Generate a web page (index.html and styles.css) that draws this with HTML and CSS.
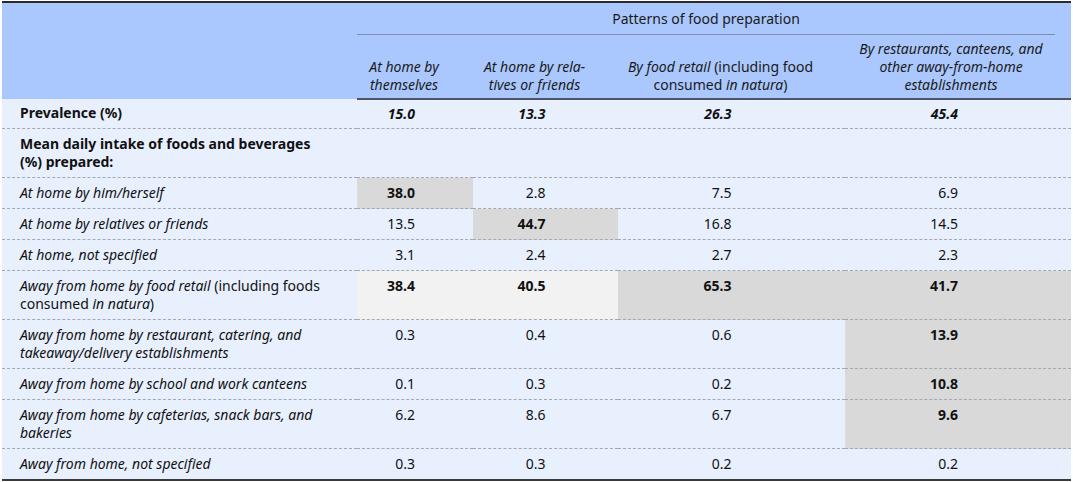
FILE: index.html
```html
<!DOCTYPE html>
<html lang="en">
<head>
<meta charset="utf-8">
<title>Patterns of food preparation</title>
<link rel="stylesheet" href="styles.css">
</head>
<body>
<table class="tbl">
  <colgroup>
    <col class="c-label">
    <col class="c-a">
    <col class="c-b">
    <col class="c-c">
    <col class="c-d">
  </colgroup>
  <thead>
    <tr>
      <th class="corner" rowspan="2"></th>
      <th class="span-head" colspan="4"><div class="span-inner">Patterns of food preparation</div></th>
    </tr>
    <tr class="sub-head">
      <th><em>At home by<br>themselves</em></th>
      <th><em>At home by rela-<br>tives or friends</em></th>
      <th><em>By food retail</em> (including food<br>consumed <em>in natura</em>)</th>
      <th class="last"><em>By restaurants, canteens, and<br>other away-from-home<br>establishments</em></th>
    </tr>
  </thead>
  <tbody>
    <tr>
      <td class="label bold">Prevalence (%)</td>
      <td><span class="num bold"><em>15.0</em></span></td>
      <td><span class="num bold"><em>13.3</em></span></td>
      <td><span class="num bold"><em>26.3</em></span></td>
      <td><span class="num bold"><em>45.4</em></span></td>
    </tr>
    <tr>
      <td class="label bold">Mean daily intake of foods and beverages<br>(%) prepared:</td>
      <td></td><td></td><td></td><td></td>
    </tr>
    <tr>
      <td class="label"><em>At home by him/herself</em></td>
      <td class="hl"><span class="num bold">38.0</span></td>
      <td><span class="num">2.8</span></td>
      <td><span class="num">7.5</span></td>
      <td><span class="num">6.9</span></td>
    </tr>
    <tr>
      <td class="label"><em>At home by relatives or friends</em></td>
      <td><span class="num">13.5</span></td>
      <td class="hl"><span class="num bold">44.7</span></td>
      <td><span class="num">16.8</span></td>
      <td><span class="num">14.5</span></td>
    </tr>
    <tr>
      <td class="label"><em>At home, not specified</em></td>
      <td><span class="num">3.1</span></td>
      <td><span class="num">2.4</span></td>
      <td><span class="num">2.7</span></td>
      <td><span class="num">2.3</span></td>
    </tr>
    <tr>
      <td class="label"><em>Away from home by food retail</em> (including foods<br>consumed <em>in natura</em>)</td>
      <td class="soft"><span class="num bold">38.4</span></td>
      <td class="soft"><span class="num bold">40.5</span></td>
      <td class="hl"><span class="num bold">65.3</span></td>
      <td class="hl"><span class="num bold">41.7</span></td>
    </tr>
    <tr>
      <td class="label"><em>Away from home by restaurant, catering, and<br>takeaway/delivery establishments</em></td>
      <td><span class="num">0.3</span></td>
      <td><span class="num">0.4</span></td>
      <td><span class="num">0.6</span></td>
      <td class="hl"><span class="num bold">13.9</span></td>
    </tr>
    <tr>
      <td class="label"><em>Away from home by school and work canteens</em></td>
      <td><span class="num">0.1</span></td>
      <td><span class="num">0.3</span></td>
      <td><span class="num">0.2</span></td>
      <td class="hl"><span class="num bold">10.8</span></td>
    </tr>
    <tr>
      <td class="label"><em>Away from home by cafeterias, snack bars, and<br>bakeries</em></td>
      <td><span class="num">6.2</span></td>
      <td><span class="num">8.6</span></td>
      <td><span class="num">6.7</span></td>
      <td class="hl"><span class="num bold">9.6</span></td>
    </tr>
    <tr>
      <td class="label"><em>Away from home, not specified</em></td>
      <td><span class="num">0.3</span></td>
      <td><span class="num">0.3</span></td>
      <td><span class="num">0.2</span></td>
      <td><span class="num">0.2</span></td>
    </tr>
  </tbody>
</table>
</body>
</html>
```
FILE: styles.css
```css
html, body {
  margin: 0;
  padding: 0;
  background: #ffffff;
}

body {
  padding: 1px 2px 0 2px;
  font-family: "Noto Sans", "DejaVu Sans", sans-serif;
  font-size: 14px;
  line-height: 18px;
  color: #111111;
}

.tbl {
  width: 1069px;
  border-collapse: collapse;
  table-layout: fixed;
  border-top: 2px solid #2b2b2b;
  border-bottom: 2px solid #3a3a3a;
}

.c-label { width: 355px; }
.c-a { width: 116px; }
.c-b { width: 145px; }
.c-c { width: 227px; }
.c-d { width: 226px; }

thead th {
  background: #aac8fd;
  font-weight: normal;
  color: #1a1a1a;
}

thead tr:last-child th {
  border-bottom: 2px solid #4f5560;
}

.span-head {
  padding: 0 16px 0 0;
  text-align: center;
}

.span-inner {
  padding: 7px 0 6px 0;
  border-bottom: 1px solid #7d8db0;
}

.sub-head th {
  padding: 5px 24px 4px 2px;
  text-align: center;
  vertical-align: bottom;
}

.sub-head th.last {
  padding-right: 16px;
}

tbody td {
  background: #e8f0fe;
  padding: 6px 0;
  vertical-align: top;
  border-bottom: 1px dashed #a4a8b0;
}

tbody tr:first-child td {
  padding-top: 5px;
  padding-bottom: 5px;
}

tbody tr:last-child td {
  border-bottom: none;
}

tbody td.label {
  padding-left: 18px;
}

tbody td.hl {
  background: #d9d9d9;
}

tbody td.soft {
  background: #f2f2f2;
}

.num {
  display: inline-block;
  width: 50%;
  text-align: right;
}

.bold {
  font-weight: bold;
}
```
